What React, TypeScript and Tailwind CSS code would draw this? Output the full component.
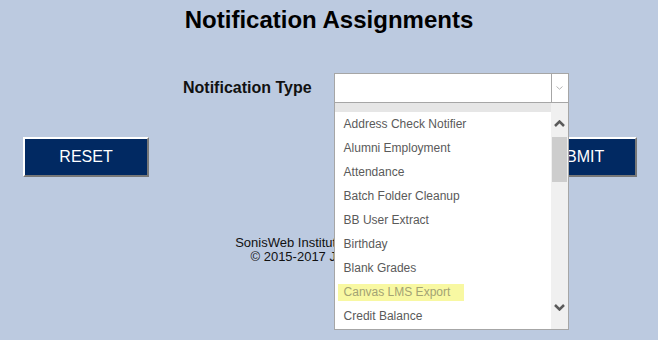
import React from "react";

const options = [
  "",
  "Address Check Notifier",
  "Alumni Employment",
  "Attendance",
  "Batch Folder Cleanup",
  "BB User Extract",
  "Birthday",
  "Blank Grades",
  "Canvas LMS Export",
  "Credit Balance",
];

export default function App() {
  return (
    <div className="w-[658px] h-[340px] overflow-hidden bg-[#bccae0] font-['Liberation_Sans',Arial,sans-serif] text-black">
      <h1 className="pt-[6px] text-center text-[24px] leading-[28px] font-bold">
        Notification Assignments
      </h1>

      <div className="mt-[39px] flex items-start pl-[183px]">
        <label className="text-[16px] font-bold leading-[30px] text-[#111]">Notification Type</label>
        <div className="relative ml-[22px] w-[235px]">
          <div className="flex h-[30px] border border-[#a6a6a6] bg-white">
            <div className="flex-1" />
            <div className="flex w-[17px] items-center justify-center border-l border-[#a6a6a6]">
              <svg width="7" height="4" viewBox="0 0 7 4" fill="none">
                <path d="M0.5 0.5 L3.5 3.2 L6.5 0.5" stroke="#b5b5b5" strokeWidth="1" />
              </svg>
            </div>
          </div>

          {/* open option list */}
          <div className="absolute left-0 top-full z-10 flex h-[227px] w-[235px] overflow-hidden border-x border-b border-[#a6a6a6] bg-white">
            <div className="flex-1 overflow-hidden">
              <ul className="-mt-[15px]">
                {options.map((o, i) => (
                  <li
                    key={i}
                    className={
                      "h-[24px] pl-[9px] text-[12px] leading-[24px] text-[#5a5a5a] " +
                      (i === 0 ? "bg-[#e6e6e6]" : "")
                    }
                  >
                    {o === "Canvas LMS Export" ? (
                      <span className="-ml-[6px] inline-block h-[17px] bg-[#f8f8a2] pl-[6px] pr-[14px] align-middle leading-[17px] text-[#a3a374]">
                        {o}
                      </span>
                    ) : (
                      o
                    )}
                  </li>
                ))}
              </ul>
            </div>
            <div className="relative w-[17px] bg-[#f0f0f0]">
              <svg className="absolute left-[3px] top-[17px]" width="11" height="7" viewBox="0 0 11 7" fill="none">
                <path d="M1 6 L5.5 1.5 L10 6" stroke="#5a5a5a" strokeWidth="2.5" />
              </svg>
              <div className="absolute left-[1px] top-[34px] h-[45px] w-[15px] bg-[#cdcdcd]" />
              <svg className="absolute bottom-[18px] left-[3px]" width="11" height="7" viewBox="0 0 11 7" fill="none">
                <path d="M1 1 L5.5 5.5 L10 1" stroke="#5a5a5a" strokeWidth="2.5" />
              </svg>
            </div>
          </div>
        </div>
      </div>

      <div className="mt-[34px] flex justify-between pl-[23px] pr-[21px]">
        <button className="h-[40px] w-[126px] border-2 border-t-white border-l-white border-r-[#777] border-b-[#777] bg-[#012962] text-[16px] text-white">
          RESET
        </button>
        <button className="h-[40px] w-[126px] border-2 border-t-white border-l-white border-r-[#777] border-b-[#777] bg-[#012962] text-[16px] text-white">
          SUBMIT
        </button>
      </div>

      <div className="mt-[59px] text-center text-[13px] leading-[14px] text-[#111]">
        <p>SonisWeb Institutional Database</p>
        <p>© 2015-2017 Jenzabar Inc.</p>
      </div>
    </div>
  );
}
